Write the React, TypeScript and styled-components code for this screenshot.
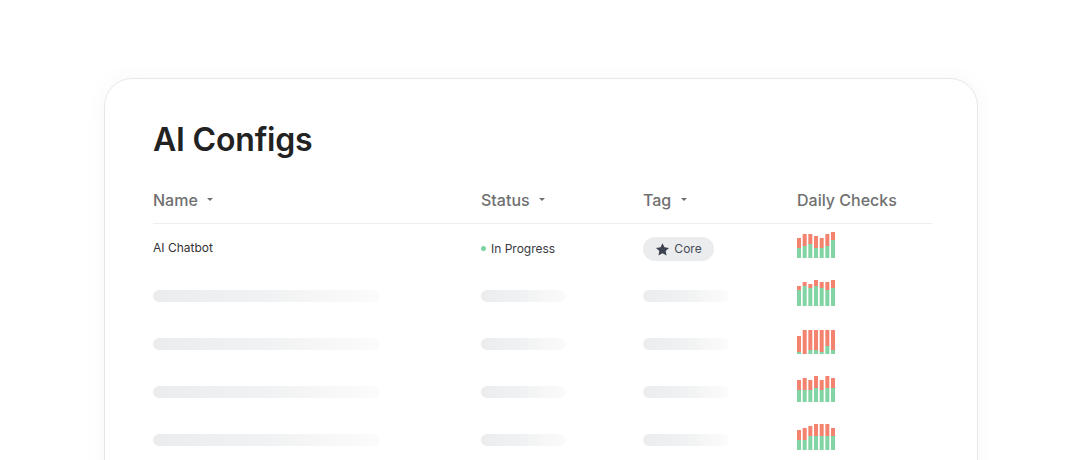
import React from "react";
import styled, { createGlobalStyle } from "styled-components";

const Global = createGlobalStyle`
  html, body { margin: 0; padding: 0; background: #fff; height: 460px; overflow: hidden; }
  body { font-family: Inter, "Liberation Sans", sans-serif; }
  * { box-sizing: border-box; }
`;

const Page = styled.div`
  height: 460px;
  overflow: hidden;
  padding: 78px 103px 0 104px;
`;

const Card = styled.section`
  height: 460px;
  padding: 43px 45px 0 48px;
  background: #fff;
  border: 1px solid #e6e7e9;
  border-radius: 28px;
  box-shadow: 0 0 24px rgba(20, 24, 40, 0.035);
`;

const Title = styled.h1`
  margin: 0;
  height: 36px;
  font-size: 32px;
  line-height: 36px;
  font-weight: 600;
  letter-spacing: -0.2px;
  color: #222222;
`;

const Grid = styled.div`
  display: grid;
  grid-template-columns: 328px 162px 154px 135px;
  align-items: center;
`;

const HeaderRow = styled(Grid)`
  margin-top: 24px;
  height: 42px;
  border-bottom: 1px solid #eeeff1;
`;

const HeaderCell = styled.div`
  display: flex;
  align-items: center;
  gap: 9.5px;
  font-size: 16px;
  line-height: 20px;
  font-weight: 500;
  color: #707070;
  margin-bottom: 6px;
`;

const Caret = styled.span`
  width: 0;
  height: 0;
  border-left: 3.5px solid transparent;
  border-right: 3.5px solid transparent;
  border-top: 3px solid #707070;
`;

const Row = styled(Grid)`
  height: 48px;
`;

const NameText = styled.span`
  font-size: 12px;
  line-height: 16px;
  color: #333333;
`;

const Status = styled.span`
  display: inline-flex;
  align-items: center;
  gap: 5px;
  font-size: 12px;
  line-height: 16px;
  color: #383a3f;
  margin-top: 2px;
`;

const Dot = styled.span`
  width: 5px;
  height: 5px;
  border-radius: 50%;
  background: #7dd3a0;
  margin-top: -1px;
`;

const Pill = styled.span`
  display: inline-flex;
  align-items: center;
  justify-content: center;
  gap: 4px;
  width: 71px;
  height: 24px;
  border-radius: 12px;
  background: #ebecee;
  font-size: 12px;
  line-height: 16px;
  color: #464a56;
  padding: 1px 0 0 0;
`;

const TagCell = styled.div`
  display: flex;
  margin-top: 1px;
`;

const Skeleton = styled.div<{ $width: number }>`
  width: ${(p) => p.$width}px;
  height: 12px;
  border-radius: 6px;
  background: linear-gradient(90deg, #ebecee 0%, #f1f2f3 50%, #fbfbfb 100%);
`;

const Chart = styled.svg`
  display: block;
  width: 39px;
  height: 26px;
  margin-bottom: 6px;
`;

const RED = "#f3826f";
const GREEN = "#82d4a4";

function DailyChecks({ bars }: { bars: [number, number][] }) {
  return (
    <Chart viewBox="0 0 39 26">
      {bars.map(([total, green], i) => {
        const x = i * 5.67;
        return (
          <g key={i}>
            <rect x={x} y={26 - total} width={4} height={total - green} fill={RED} />
            {green > 0 && <rect x={x} y={26 - green} width={4} height={green} fill={GREEN} />}
          </g>
        );
      })}
    </Chart>
  );
}

const StarIcon = () => (
  <svg width="15" height="15" viewBox="0 0 24 24" fill="#3d4250" aria-hidden="true">
    <path d="M12 1.8l3.15 6.65 7.25.95-5.3 5.05 1.35 7.2L12 18.15 5.55 21.65l1.35-7.2-5.3-5.05 7.25-.95z" />
  </svg>
);

const rows: [number, number][][] = [
  [[20, 10], [24, 12], [24, 14], [22, 10], [20, 10], [24, 12], [26, 18]],
  [[20, 16], [24, 20], [22, 18], [26, 20], [24, 18], [24, 16], [26, 18]],
  [[18, 2], [24, 0], [24, 4], [24, 4], [24, 2], [24, 8], [24, 4]],
  [[22, 12], [24, 12], [22, 12], [26, 14], [22, 12], [26, 14], [24, 14]],
  [[20, 10], [22, 10], [24, 14], [26, 14], [26, 14], [26, 14], [22, 14]],
];

export default function App() {
  return (
    <Page>
      <Global />
      <Card>
        <Title>AI Configs</Title>
        <HeaderRow>
          <HeaderCell>Name <Caret /></HeaderCell>
          <HeaderCell>Status <Caret /></HeaderCell>
          <HeaderCell>Tag <Caret /></HeaderCell>
          <HeaderCell>Daily Checks</HeaderCell>
        </HeaderRow>
        {rows.map((bars, i) => (
          <Row key={i}>
            {i === 0 ? (
              <>
                <NameText>AI Chatbot</NameText>
                <Status><Dot />In Progress</Status>
                <TagCell><Pill><StarIcon />Core</Pill></TagCell>
              </>
            ) : (
              <>
                <Skeleton $width={227} />
                <Skeleton $width={85} />
                <Skeleton $width={86} />
              </>
            )}
            <DailyChecks bars={bars} />
          </Row>
        ))}
      </Card>
    </Page>
  );
}
